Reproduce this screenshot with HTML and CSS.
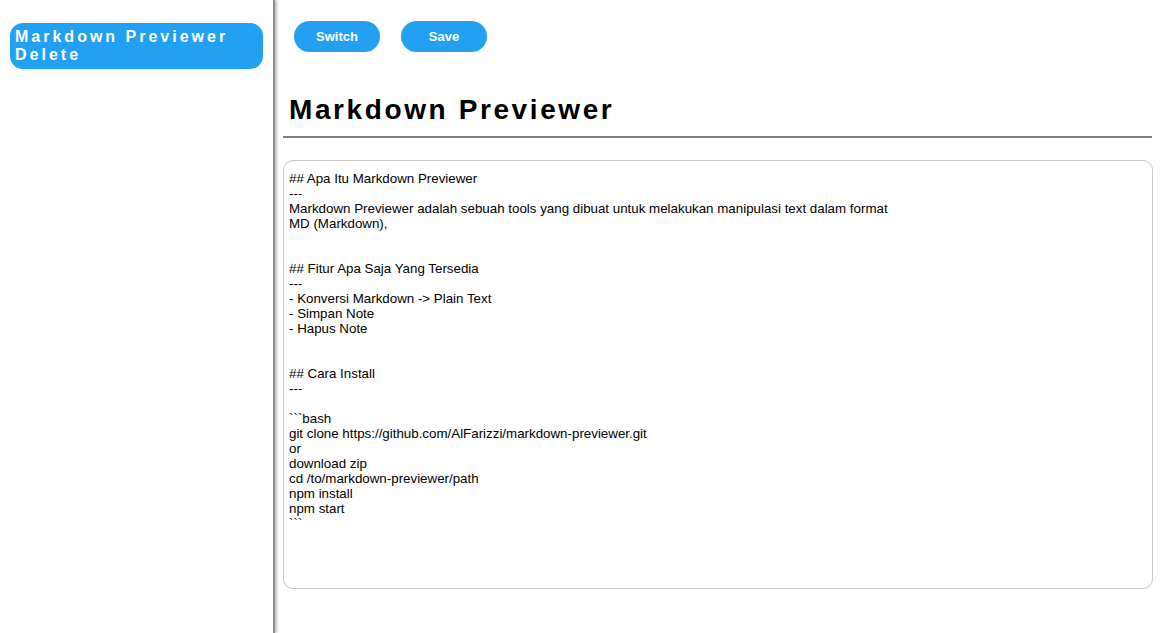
FILE: index.html
```html
<!DOCTYPE html>
<html lang="id">
<head>
<meta charset="utf-8">
<title>Markdown Previewer</title>
<link rel="stylesheet" href="styles.css">
</head>
<body>
<div class="app">
  <aside class="sidebar">
    <div class="note-item">Markdown Previewer Delete</div>
  </aside>
  <main class="main">
    <div class="toolbar">
      <button class="btn">Switch</button>
      <button class="btn">Save</button>
    </div>
    <h1 class="title">Markdown Previewer</h1>
    <textarea class="editor">## Apa Itu Markdown Previewer
---
Markdown Previewer adalah sebuah tools yang dibuat untuk melakukan manipulasi text dalam format
MD (Markdown),


## Fitur Apa Saja Yang Tersedia
---
- Konversi Markdown -&gt; Plain Text
- Simpan Note
- Hapus Note


## Cara Install
---

```bash
git clone https://github.com/AlFarizzi/markdown-previewer.git
or
download zip
cd /to/markdown-previewer/path
npm install
npm start
```</textarea>
  </main>
</div>
</body>
</html>
```

FILE: styles.css
```css
* { box-sizing: border-box; }
html, body { margin: 0; padding: 0; background: #fff; }
body { font-family: "Liberation Sans", Arial, sans-serif; }
.app { display: flex; height: 633px; }
.sidebar {
  width: 275px;
  flex: none;
  padding: 23px 10px 10px 10px;
  border-right: 2px solid #8a8a8a;
  box-shadow: 2px 0 3px rgba(0,0,0,0.25);
}
.note-item {
  background: #22a1f2;
  color: #fff;
  font-weight: bold;
  font-size: 16px;
  line-height: 18px;
  letter-spacing: 3px;
  padding: 5px 6px 5px 5px;
  border-radius: 13px;
}
.main {
  flex: 1;
  padding: 21px 20px 0 8px;
  display: flex;
  flex-direction: column;
}
.toolbar { display: flex; gap: 21px; padding-left: 11px; }
.btn {
  width: 86px;
  height: 31px;
  border: none;
  border-radius: 16px;
  background: #22a1f2;
  color: #fff;
  font-family: "Liberation Sans", Arial, sans-serif;
  font-weight: bold;
  font-size: 13px;
  padding: 0;
}
.title {
  margin: 42px 1px 0 0;
  padding: 0 0 10px 6px;
  font-size: 28px;
  line-height: 32px;
  letter-spacing: 2.6px;
  font-weight: bold;
  color: #000;
  border-bottom: 2px solid #808080;
}
.editor {
  margin-top: 22px;
  height: 429px;
  width: 100%;
  border: 1px solid #c8c8c8;
  border-radius: 10px;
  padding: 10px 5px;
  font-family: "Liberation Sans", Arial, sans-serif;
  font-size: 13.333px;
  line-height: 15px;
  color: #000;
  resize: none;
  outline: none;
  background: #fff;
}
```
